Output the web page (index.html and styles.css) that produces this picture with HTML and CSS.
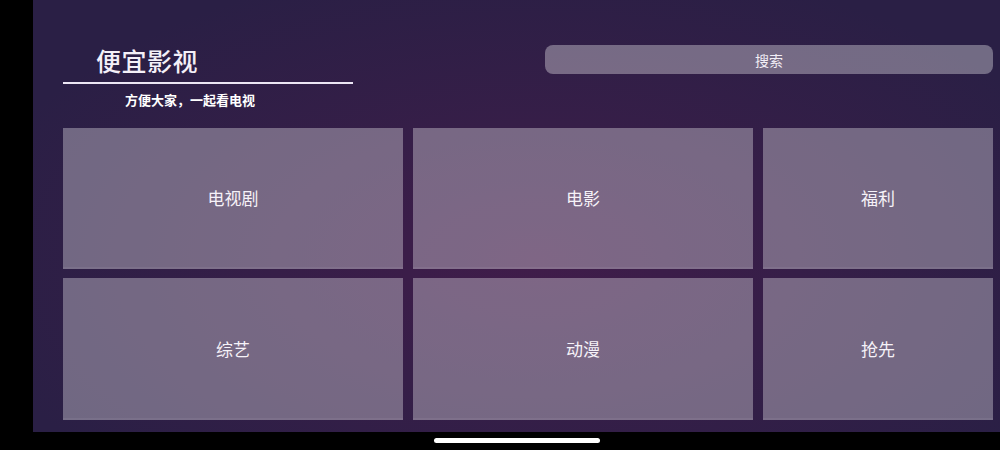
FILE: index.html
```html
<!DOCTYPE html>
<html lang="zh">
<head>
<meta charset="utf-8">
<title>便宜影视</title>
<link rel="stylesheet" href="styles.css">
</head>
<body>
<div class="screen">
  <div class="side"></div>
  <div class="column">
    <div class="app">
      <header class="header">
        <div class="brand">
          <h1 class="title">便宜影视</h1>
          <div class="rule"></div>
          <p class="slogan">方便大家，一起看电视</p>
        </div>
        <div class="search">搜索</div>
      </header>
      <main class="grid">
        <div class="tile">电视剧</div>
        <div class="tile">电影</div>
        <div class="tile">福利</div>
        <div class="tile">综艺</div>
        <div class="tile">动漫</div>
        <div class="tile">抢先</div>
      </main>
    </div>
    <div class="home"><span class="pill"></span></div>
  </div>
</div>
</body>
</html>
```

FILE: styles.css
```css
html, body {
  margin: 0;
  padding: 0;
  background: #000;
}
body {
  font-family: "Noto Sans CJK SC", "Noto Sans", sans-serif;
  color: #fff;
}
.screen {
  display: flex;
  width: 1000px;
  height: 450px;
  overflow: hidden;
}
.side {
  width: 33px;
  flex: none;
  background: #000;
}
.column {
  flex: 1;
  display: flex;
  flex-direction: column;
}
.app {
  height: 432px;
  box-sizing: border-box;
  padding: 0 7px 0 30px;
  background:
    radial-gradient(ellipse 60% 70% at 52% 60%, #401c4a 0%, #361e48 45%, #2a1f45 100%);
  display: flex;
  flex-direction: column;
}
.header {
  display: flex;
  height: 128px;
}
.brand {
  width: 290px;
  padding-top: 44px;
}
.title {
  margin: 0;
  padding-left: 33px;
  font-size: 25px;
  line-height: 32px;
  font-weight: 500;
  letter-spacing: 0.5px;
  color: #f4f0f8;
}
.rule {
  margin-top: 6px;
  height: 2px;
  background: #ece6f4;
}
.slogan {
  margin: 7px 0 0;
  padding-left: 62px;
  font-size: 13px;
  line-height: 18px;
  font-weight: 700;
  color: #fff;
}
.search {
  margin-left: auto;
  margin-top: 45px;
  width: 448px;
  height: 29px;
  border-radius: 8px;
  background: rgba(255, 255, 255, 0.34);
  display: flex;
  align-items: center;
  justify-content: center;
  font-size: 14px;
  color: #f2eef6;
}
.grid {
  display: grid;
  grid-template-columns: 340px 340px 230px;
  grid-template-rows: 141px 142px;
  column-gap: 10px;
  row-gap: 9px;
}
.tile {
  background: rgba(255, 255, 255, 0.33);
  display: flex;
  align-items: center;
  justify-content: center;
  padding-bottom: 2px;
  font-size: 17px;
  color: #f6f2f8;
  box-shadow: inset 0 -2px 0 rgba(255, 255, 255, 0.06);
}
.home {
  height: 18px;
  display: flex;
  justify-content: center;
  align-items: flex-start;
}
.pill {
  margin-top: 6px;
  width: 166px;
  height: 5px;
  border-radius: 3px;
  background: #fff;
}
```
